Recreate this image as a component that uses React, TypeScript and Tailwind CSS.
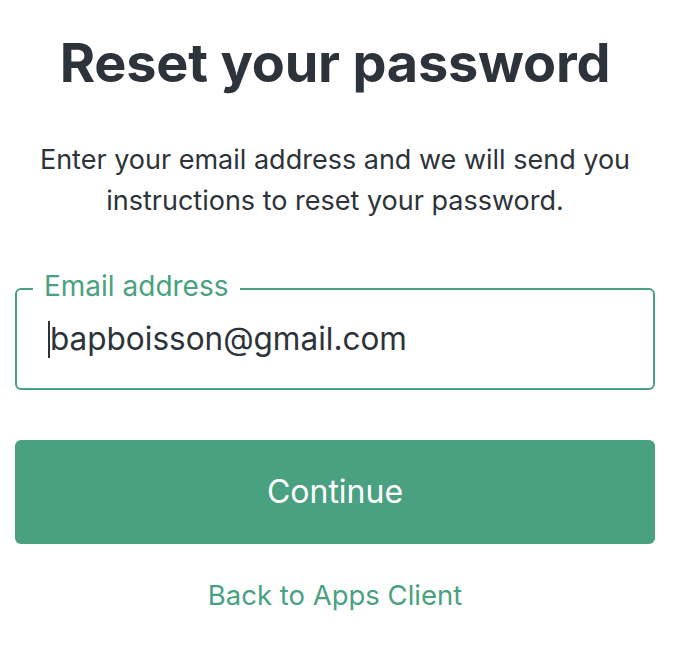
import React from "react";

const App = () => {
  return (
    <div className="min-h-[648px] w-[690px] bg-white font-['Inter',sans-serif] text-[#2d333a]">
      <div className="ml-[15px] w-[640px] flex flex-col items-center pt-[28px]">
        <h1 className="text-[54px] font-bold leading-[70px] tracking-[-0.2px] text-center">
          Reset your password
        </h1>
        <p className="mt-[41px] text-[27px] leading-[41px] text-center text-[#2d333a]">
          Enter your email address and we will send you
          <br />
          instructions to reset your password.
        </p>

        <div className="relative mt-[67px] w-full">
          <div className="h-[102px] w-full rounded-[6px] border-2 border-[#4aa181] flex items-center pl-[31px]">
            <span className="w-[2px] h-[37px] bg-[#2d333a]"></span>
            <span className="text-[31.5px] text-[#2d333a]">bapboisson@gmail.com</span>
          </div>
          <label className="absolute left-[18px] top-[-19px] bg-white px-[11px] text-[28px] leading-[34px] text-[#4aa181]">
            Email address
          </label>
        </div>

        <button className="mt-[50px] h-[104px] w-full rounded-[6px] bg-[#4aa181] text-white text-[32px]">
          Continue
        </button>

        <a className="mt-[31px] text-[27.5px] leading-[40px] text-[#4aa181]">
          Back to Apps Client
        </a>
      </div>
    </div>
  );
};

export default App;
